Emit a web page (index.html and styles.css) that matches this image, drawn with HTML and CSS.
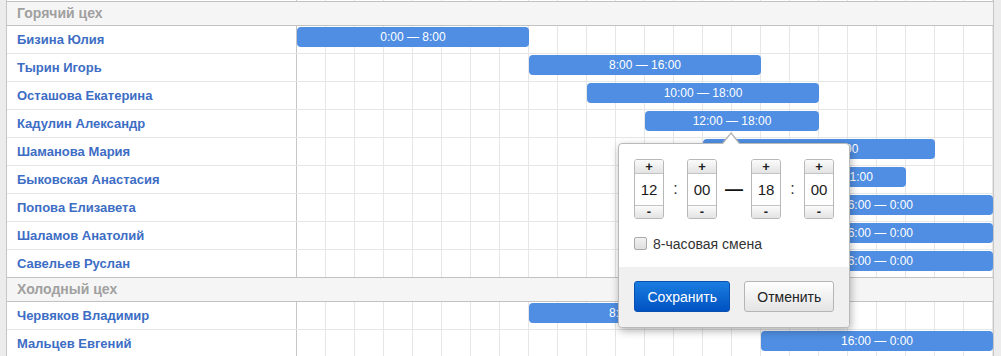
FILE: index.html
```html
<!DOCTYPE html>
<html lang="ru">

<head>
    <meta charset="UTF-8">
    <title>График смен</title>
    <link rel="stylesheet" href="styles.css">
</head>

<body>
    <div class="board">
        <div class="row row-stub">
            <div class="name"></div>
            <div class="timeline"></div>
        </div>

        <div class="group">Горячий цех</div>
        <div class="row">
            <div class="name">Бизина Юлия</div>
            <div class="timeline"><div class="shift" style="grid-column: 1 / 9">0:00 — 8:00</div></div>
        </div>
        <div class="row">
            <div class="name">Тырин Игорь</div>
            <div class="timeline"><div class="shift" style="grid-column: 9 / 17">8:00 — 16:00</div></div>
        </div>
        <div class="row">
            <div class="name">Осташова Екатерина</div>
            <div class="timeline"><div class="shift" style="grid-column: 11 / 19">10:00 — 18:00</div></div>
        </div>
        <div class="row">
            <div class="name">Кадулин Александр</div>
            <div class="timeline"><div class="shift" style="grid-column: 13 / 19">12:00 — 18:00</div></div>
        </div>
        <div class="row">
            <div class="name">Шаманова Мария</div>
            <div class="timeline"><div class="shift" style="grid-column: 15 / 23">14:00 — 22:00</div></div>
        </div>
        <div class="row">
            <div class="name">Быковская Анастасия</div>
            <div class="timeline"><div class="shift" style="grid-column: 17 / 22">16:00 — 21:00</div></div>
        </div>
        <div class="row">
            <div class="name">Попова Елизавета</div>
            <div class="timeline"><div class="shift" style="grid-column: 17 / 25">16:00 — 0:00</div></div>
        </div>
        <div class="row">
            <div class="name">Шаламов Анатолий</div>
            <div class="timeline"><div class="shift" style="grid-column: 17 / 25">16:00 — 0:00</div></div>
        </div>
        <div class="row">
            <div class="name">Савельев Руслан</div>
            <div class="timeline"><div class="shift" style="grid-column: 17 / 25">16:00 — 0:00</div></div>
        </div>

        <div class="group">Холодный цех</div>
        <div class="row">
            <div class="name">Червяков Владимир</div>
            <div class="timeline"><div class="shift" style="grid-column: 9 / 17">8:00 — 16:00</div></div>
        </div>
        <div class="row">
            <div class="name">Мальцев Евгений</div>
            <div class="timeline"><div class="shift" style="grid-column: 17 / 25">16:00 — 0:00</div></div>
        </div>
    </div>

    <!-- shift editor for Кадулин Александр -->
    <div class="popover">
        <div class="popover-body">
            <div class="time-range">
                <div class="spinner">
                    <button class="spin-btn">+</button>
                    <div class="spin-value">12</div>
                    <button class="spin-btn">-</button>
                </div>
                <span class="colon">:</span>
                <div class="spinner">
                    <button class="spin-btn">+</button>
                    <div class="spin-value">00</div>
                    <button class="spin-btn">-</button>
                </div>
                <span class="dash">—</span>
                <div class="spinner">
                    <button class="spin-btn">+</button>
                    <div class="spin-value">18</div>
                    <button class="spin-btn">-</button>
                </div>
                <span class="colon">:</span>
                <div class="spinner">
                    <button class="spin-btn">+</button>
                    <div class="spin-value">00</div>
                    <button class="spin-btn">-</button>
                </div>
            </div>

            <label class="check-row">
                <span class="checkbox"></span>
                8-часовая смена
            </label>
        </div>

        <div class="popover-footer">
            <button class="btn btn-primary">Сохранить</button>
            <button class="btn">Отменить</button>
        </div>
    </div>
</body>

</html>
```

FILE: styles.css
```css
body {
    margin: 0;
    background-color: #ececec;
    font-family: "Liberation Sans", Arial, sans-serif;
}

.board {
    width: 986px;
    margin-left: 6px;
    background-color: #fff;
    border-left: 1px solid #c6c6c6;
    border-right: 1px solid #c6c6c6;
    overflow: hidden;
}

/* group header */
.group {
    height: 23px;
    line-height: 23px;
    padding-left: 10px;
    background-color: #f5f5f5;
    border-top: 1px solid #c2c2c2;
    border-bottom: 1px solid #c2c2c2;
    color: #a0a0a0;
    font-size: 14px;
    font-weight: bold;
}

.row {
    display: flex;
    height: 27px;
}

.row + .row {
    border-top: 1px solid #e6e6e6;
}

.row-stub {
    height: 1px;
}

.name {
    width: 291px;
    box-sizing: border-box;
    padding-left: 10px;
    border-right: 1px solid #c6c6c6;
    line-height: 27px;
    color: #3d6dc4;
    font-size: 13px;
    font-weight: bold;
    white-space: nowrap;
}

.timeline {
    flex: 1;
    display: grid;
    grid-template-columns: repeat(24, 29px);
    align-items: start;
    background-image: repeating-linear-gradient(to right, transparent 0 28px, #e6e6e6 28px 29px);
}

.shift {
    height: 20px;
    margin-top: 1px;
    line-height: 20px;
    border-radius: 4px;
    background-color: #4f8ee3;
    color: #fff;
    font-size: 12px;
    text-align: center;
    white-space: nowrap;
    overflow: hidden;
}

/* popover */
.popover {
    position: absolute;
    left: 618px;
    top: 143px;
    width: 232px;
    box-sizing: border-box;
    background-color: #fff;
    border: 1px solid #b9b9b9;
    border-radius: 4px;
    box-shadow: 1px 3px 8px rgba(0, 0, 0, 0.3);
}

.popover::before,
.popover::after {
    content: "";
    position: absolute;
    left: 103px;
    width: 0;
    height: 0;
    border-left: 9px solid transparent;
    border-right: 9px solid transparent;
}

.popover::before {
    top: -12px;
    border-bottom: 11px solid #b0b0b0;
}

.popover::after {
    top: -10px;
    left: 104px;
    border-left-width: 8px;
    border-right-width: 8px;
    border-bottom: 10px solid #fff;
}

.popover-body {
    padding: 15px 15px 15px;
}

.time-range {
    display: flex;
    align-items: center;
}

.spinner {
    display: flex;
    flex-direction: column;
    width: 30px;
    box-sizing: border-box;
    border: 1px solid #b8b8b8;
    border-radius: 3px;
    overflow: hidden;
}

.spin-btn {
    height: 14px;
    padding: 0;
    border: none;
    background: linear-gradient(#fbfbfb, #e3e3e3);
    color: #222;
    font-family: "Liberation Sans", Arial, sans-serif;
    font-size: 13px;
    font-weight: bold;
    line-height: 12px;
}

.spin-btn:first-child {
    border-bottom: 1px solid #c4c4c4;
}

.spin-btn:last-child {
    height: 13px;
    border-top: 1px solid #c4c4c4;
}

.spin-value {
    display: flex;
    align-items: center;
    justify-content: center;
    height: 31px;
    line-height: 1;
    color: #1a1a1a;
    font-size: 15px;
}

.colon {
    width: 23px;
    text-align: center;
    color: #333;
    font-size: 16px;
}

.dash {
    width: 34px;
    text-align: center;
    color: #111;
    font-size: 18px;
    font-weight: bold;
}

.check-row {
    display: flex;
    align-items: center;
    height: 17px;
    margin-top: 16px;
    color: #333;
    font-size: 14px;
}

.checkbox {
    width: 13px;
    height: 13px;
    box-sizing: border-box;
    margin-right: 6px;
    border: 1px solid #aaa;
    border-radius: 2px;
    background: linear-gradient(#f2f2f2, #dedede);
}

.popover-footer {
    display: flex;
    gap: 14px;
    padding: 14px 15px 15px;
    background-color: #f0f0f0;
    border-radius: 0 0 4px 4px;
}

.btn {
    height: 31px;
    width: 90px;
    padding: 0;
    border: 1px solid #b5b5b5;
    border-radius: 3px;
    background: linear-gradient(#fefefe, #e4e4e4);
    color: #222;
    font-family: "Liberation Sans", Arial, sans-serif;
    font-size: 14px;
    cursor: pointer;
}

.btn-primary {
    width: 97px;
    border-color: #0a50b0;
    background: linear-gradient(#1a7de0, #0052c2);
    color: #fff;
}
```
